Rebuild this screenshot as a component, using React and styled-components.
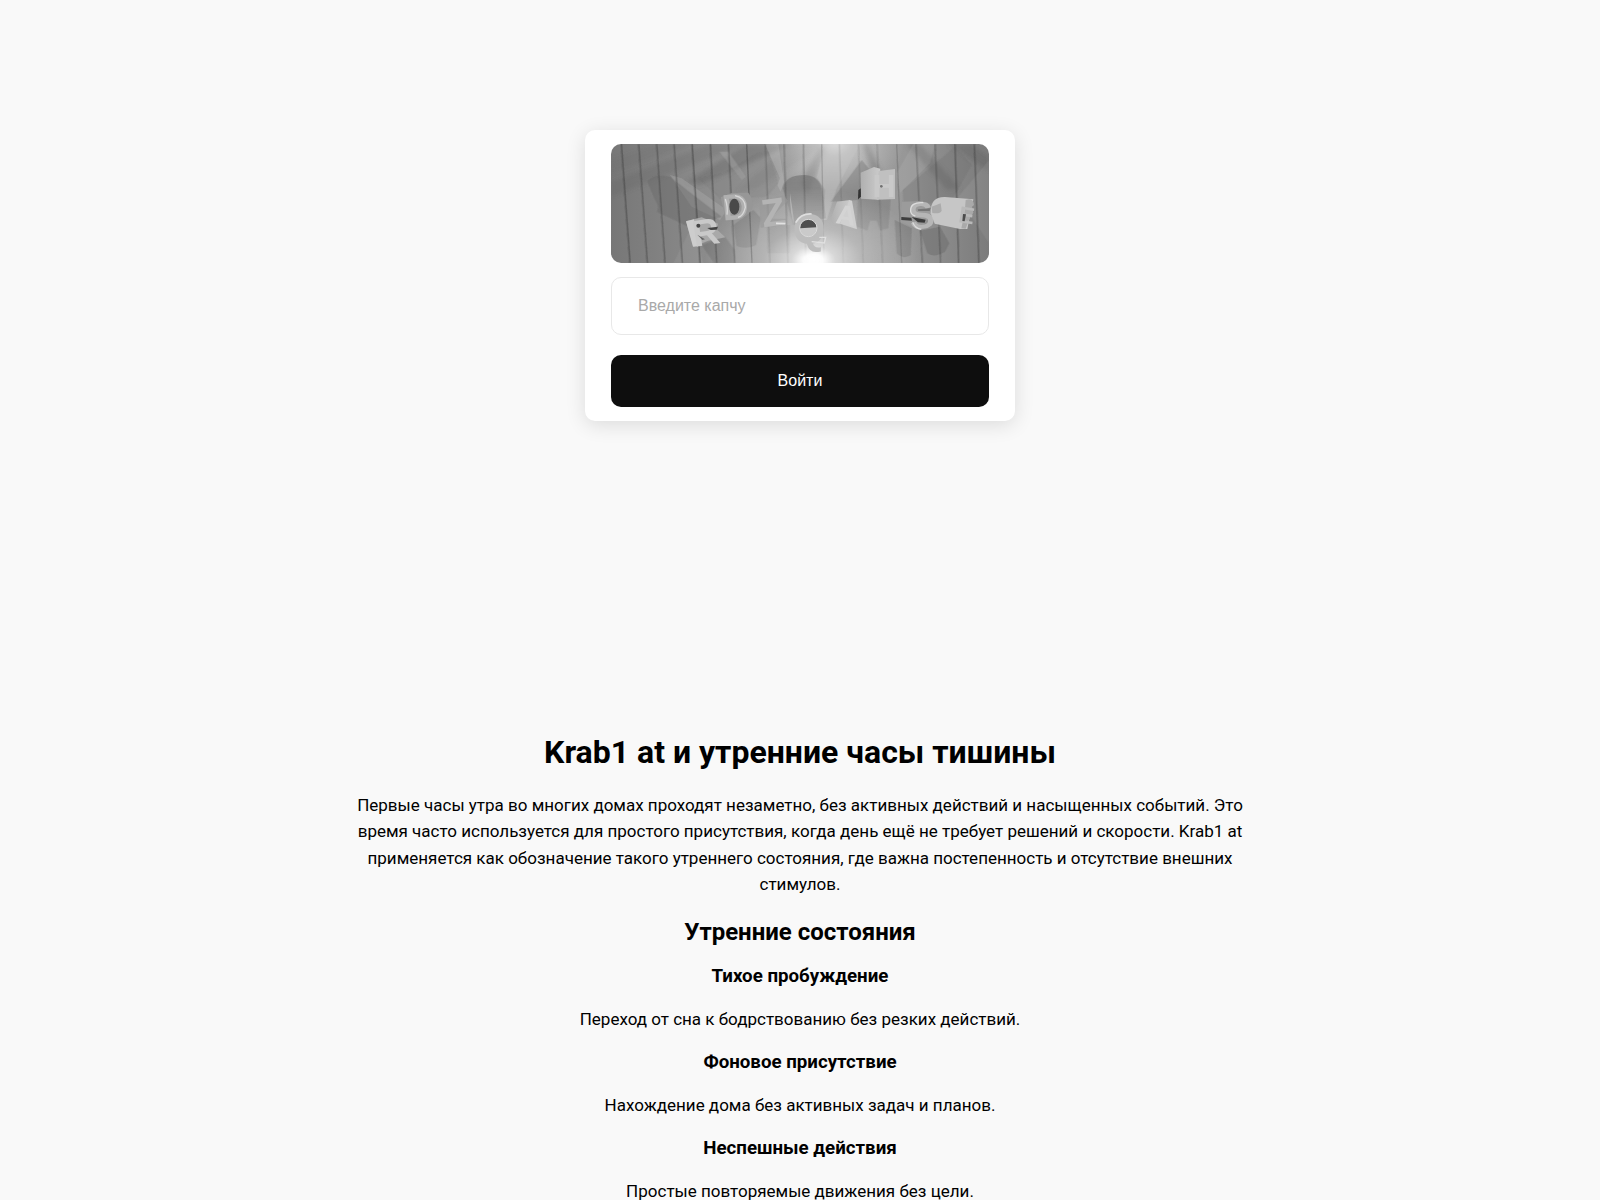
import React from "react";
import styled, { createGlobalStyle } from "styled-components";

const Global = createGlobalStyle`
  *, *::before, *::after { box-sizing: border-box; }
  body { margin: 0; background: #f9f9f9; color: #000; font-family: Roboto, "Liberation Sans", sans-serif; }
`;

const Screen = styled.main`
  display: flex;
  flex-direction: column;
  align-items: center;
  padding: 130px 20px 20px;
`;

const Card = styled.form`
  display: flex;
  flex-direction: column;
  width: 100%;
  max-width: 430px;
  padding: 14px 26px;
  border-radius: 10px;
  background: #fff;
  box-shadow: 0 4px 20px rgba(0, 0, 0, 0.12);
`;

const Captcha = styled.svg`
  display: block;
  width: 100%;
  height: auto;
  margin-bottom: 14px;
  border-radius: 10px;
`;

const Glyph = styled.text`
  font-family: "Liberation Sans", Arial, sans-serif;
  font-weight: 700;
  font-size: ${(p) => p.$size}px;
  text-anchor: middle;
`;

const Field = styled.input`
  width: 100%;
  height: 58px;
  margin: 0 0 20px;
  padding: 0 26px;
  border: 1px solid #e8e8e8;
  border-radius: 10px;
  background: #fff;
  font: 16px "Liberation Sans", Arial, sans-serif;
  &::placeholder { color: #a9a9a9; opacity: 1; }
`;

const Submit = styled.button`
  height: 52px;
  border: 0;
  border-radius: 10px;
  background: #0e0e0e;
  color: #fff;
  font: 16px "Liberation Sans", Arial, sans-serif;
  cursor: pointer;
`;

const Article = styled.article`
  width: 100%;
  max-width: 900px;
  margin-top: 311px;
  text-align: center;
`;

const Title = styled.h1`
  margin: 0 0 20px;
  font-size: 32px;
  line-height: 40px;
`;

const Subtitle = styled.h2`
  margin: 0 0 13px;
  font-size: 24px;
  line-height: 36px;
`;

const Topic = styled.h3`
  margin: 0 0 17px;
  line-height: 26px;
`;

const Text = styled.p`
  margin: 0 0 17px;
  font-size: 17px;
  line-height: 1.55;
`;

const TopicText = styled(Text)`
  line-height: 26px;
`;

/* Top and bottom x of each groove between the wall boards, with its darkness. */
const grooves = [
  [184, 210, 0.5], [236, 262, 0.45], [290, 315, 0.42], [342, 367, 0.42], [396, 420, 0.55],
  [451, 470, 0.5], [505, 524, 0.42], [560, 576, 0.42], [616, 630, 0.25], [672, 684, 0.3],
  [730, 738, 0.3], [785, 792, 0.2], [838, 850, 0.15], [895, 910, 0.15], [951, 968, 0.18],
  [1010, 1025, 0.22], [1068, 1087, 0.32], [1125, 1142, 0.35], [1185, 1196, 0.48], [1243, 1257, 0.45],
];

const topics = [
  ["Тихое пробуждение", "Переход от сна к бодрствованию без резких действий."],
  ["Фоновое присутствие", "Нахождение дома без активных задач и планов."],
  ["Неспешные действия", "Простые повторяемые движения без цели."],
];

function CaptchaPicture() {
  return (
    <Captcha viewBox="153 102 1134 357" role="img" aria-label="Капча">
      <defs>
        <linearGradient id="wall" x1="0" x2="1" y1="0" y2="0">
          <stop offset="0" stopColor="#777" />
          <stop offset="0.25" stopColor="#8b8b8b" />
          <stop offset="0.5" stopColor="#a0a0a0" />
          <stop offset="0.78" stopColor="#979797" />
          <stop offset="1" stopColor="#7b7b7b" />
        </linearGradient>
        <radialGradient id="lamp">
          <stop offset="0" stopColor="#fff" />
          <stop offset="0.09" stopColor="#fff" stopOpacity="0.97" />
          <stop offset="0.2" stopColor="#fff" stopOpacity="0.6" />
          <stop offset="0.45" stopColor="#fff" stopOpacity="0.28" />
          <stop offset="1" stopColor="#fff" stopOpacity="0" />
        </radialGradient>
        <radialGradient id="topLamp">
          <stop offset="0" stopColor="#fff" stopOpacity="0.75" />
          <stop offset="0.25" stopColor="#fff" stopOpacity="0.4" />
          <stop offset="1" stopColor="#fff" stopOpacity="0" />
        </radialGradient>
        <linearGradient id="column" x1="0" x2="0" y1="0" y2="1">
          <stop offset="0" stopColor="#727272" stopOpacity="0.65" />
          <stop offset="1" stopColor="#777" stopOpacity="0.4" />
        </linearGradient>
        <linearGradient id="side" x1="0" x2="1" y1="0" y2="0">
          <stop offset="0" stopColor="#b0b0b0" />
          <stop offset="1" stopColor="#cbcbcb" />
        </linearGradient>
        <linearGradient id="metal" x1="0" x2="1" y1="0" y2="1">
          <stop offset="0" stopColor="#bdbdbd" />
          <stop offset="0.5" stopColor="#a2a2a2" />
          <stop offset="1" stopColor="#c4c4c4" />
        </linearGradient>
        <filter id="soft" x="-5%" y="-5%" width="110%" height="110%">
          <feGaussianBlur stdDeviation="2" />
        </filter>
        <filter id="haze" x="-20%" y="-20%" width="140%" height="140%">
          <feGaussianBlur stdDeviation="6" />
        </filter>
      </defs>

      <rect x="153" y="102" width="1134" height="357" fill="url(#wall)" />

      {/* Soft bands of shade falling from the upper lamp */}
      <g filter="url(#haze)" fill="#5c5c5c">
        <path d="M560 102L700 102L420 225L380 215Z" opacity="0.34" />
        <path d="M450 102L560 102L153 260V215Z" opacity="0.2" />
        <path d="M300 102L400 102L153 190V150Z" opacity="0.16" />
        <path d="M690 102L800 102L590 235L530 245Z" opacity="0.16" />
        <path d="M780 110L800 112L745 250L720 220Z" opacity="0.35" />
        <path d="M908 102H925L965 190L935 190Z" opacity="0.5" />
        <path d="M1040 102H1080L1200 235L1160 240Z" opacity="0.34" />
        <path d="M1165 102H1235L1287 140V185Z" opacity="0.34" />
      </g>
      <ellipse cx="825" cy="96" rx="210" ry="170" fill="url(#topLamp)" />

      <g filter="url(#soft)">
        {/* Light patches */}
        <g fill="#c8c8c8">
          <path d="M330 195L365 205L500 300L480 330L395 290Z" opacity="0.22" />
          <path d="M478 125L505 125L558 200L545 210Z" opacity="0.25" />
          <path d="M615 102H655L672 215L662 245L652 225L660 205Z" opacity="0.28" />
          <path d="M770 200L795 102H900L830 235L800 330H790L795 240Z" opacity="0.38" />
          <path d="M1060 102L1125 102L1110 160L1020 250L1010 190Z" opacity="0.15" />
          <path d="M340 459L400 340L430 459Z" opacity="0.12" />
          <path d="M1287 150L1195 260L1287 400Z" opacity="0.12" />
        </g>

        {/* Shadows thrown by the solid letters */}
        <g fill="#656565">
          <path d="M262 215Q280 190 330 200L400 255L485 320L390 352L290 305Q300 290 285 270Z" opacity="0.38" />
          <path d="M425 405L495 380L525 420V459H462Z" opacity="0.35" />
          <path d="M415 205L490 190L590 130L625 125L655 220L620 260L480 265Z" opacity="0.14" />
          <path d="M520 345L580 300L603 325L588 405Q560 420 530 408Z" opacity="0.34" />
          <path d="M620 350L690 345V430H622Z" opacity="0.2" />
          <path d="M812 275L905 150L930 180L895 270Z" opacity="0.32" />
          <path d="M893 265L992 268L985 355L960 362L950 332H930L922 362L890 350Z" opacity="0.28" />
          <path d="M1028 240L1120 165L1185 110L1235 165L1180 262L1110 280L1030 275Z" opacity="0.22" />
          <path d="M1004 330L1055 355L1052 435Q1030 450 1010 430Z" opacity="0.36" />
          <path d="M1080 362L1140 350L1168 400L1155 425Q1120 445 1102 430Z" opacity="0.42" />
        </g>
        <path d="M668 235Q675 195 735 195Q782 198 787 245L797 325L700 345Z" fill="url(#column)" />

        {grooves.map(([top, bottom, depth]) => (
          <line key={top} x1={top} x2={bottom} y1="102" y2="459" stroke="#333" strokeWidth="4" opacity={depth} />
        ))}
      </g>

      <ellipse cx="760" cy="452" rx="330" ry="220" fill="url(#lamp)" />

      <g filter="url(#soft)">
        {/* R */}
        <path d="M378 334L425 322L474 341L470 358L496 382L445 392L400 410Z" fill="#a9a9a9" />
        <path d="M378 334L402 328L414 409L399 410Z" fill="#cdcdcd" />
        <Glyph $size={112} x="438" y="405" transform="rotate(-9 438 370)" fill="#c9c9c9">R</Glyph>
        <circle cx="415" cy="347" r="6" fill="#444" />
        <path d="M442 354L474 350L470 359L452 360Z" fill="#454545" />
        <path d="M412 374L435 388L427 390Z" fill="#666" />

        {/* D */}
        <path d="M482 262L515 249L565 248Q583 270 576 300L545 328L498 332Z" fill="#979797" />
        <Glyph $size={110} x="526" y="328" transform="rotate(-5 526 290)" fill="#b0b0b0">D</Glyph>
        <ellipse cx="523" cy="290" rx="15" ry="24" fill="#484848" />
        <path d="M496 267Q504 290 501 314M525 257Q555 263 556 292Q550 318 534 322" fill="none" stroke="#d8d8d8" strokeWidth="4" />

        {/* Z */}
        <path d="M598 276L670 255L684 272L630 326L680 326V345L602 353Z" fill="#999" opacity="0.6" />
        <Glyph $size={118} x="640" y="348" transform="rotate(-8 640 310)" fill="#b4b4b4">Z</Glyph>
        <path d="M648 340L676 341" fill="none" stroke="#e2e2e2" strokeWidth="5" />

        {/* Q */}
        <path d="M690 250Q690 310 702 350L712 375Q697 350 702 330Z" fill="#b4b4b4" />
        <circle cx="745" cy="354" r="36" fill="#bdbdbd" />
        <Glyph $size={126} x="747" y="398" fill="#bdbdbd">Q</Glyph>
        <circle cx="745" cy="354" r="25" fill="#cacaca" />
        <path d="M720 355A25 25 0 0 1 770 352Z" fill="#505050" />
        <circle cx="745" cy="354" r="26" fill="none" stroke="#dadada" strokeWidth="3" />
        <path d="M707 338Q722 310 755 312" fill="none" stroke="#dedede" strokeWidth="5" />
        <path d="M778 382H797L793 399L755 395" fill="none" stroke="#e0e0e0" strokeWidth="4" />

        {/* A */}
        <path d="M812 328L831 275L870 270L862 340L822 341Z" fill="url(#side)" />
        <path d="M868 270L876 272L891 358L840 341Z" fill="#d0d0d0" />
        <Glyph $size={82} x="858" y="344" transform="rotate(9 858 320)" fill="#d4d4d4">A</Glyph>

        {/* H */}
        <path d="M895 240L903 235V260L894 268Z" fill="#333" />
        <path d="M902 188L942 171L961 176L956 269L903 266Z" fill="url(#side)" />
        <path d="M956 183L1005 177V267L950 269Z" fill="#c0c0c0" />
        <Glyph $size={96} x="972" y="260" fill="#c9c9c9">H</Glyph>
        <circle cx="964" cy="229" r="4" fill="#707070" />

        {/* S */}
        <path d="M1025 276L1088 272L1114 310L1080 360L1022 335Z" fill="#9b9b9b" />
        <path d="M1024 321L1054 323L1056 332L1024 330Z" fill="#3c3c3c" />
        <Glyph $size={114} x="1085" y="356" transform="rotate(-8 1085 320)" fill="#b6b6b6">S</Glyph>
        <path d="M1073 298L1112 295L1109 303L1075 303Z" fill="#757575" />
        <path d="M1090 278Q1050 275 1052 304Q1054 315 1066 318M1058 337Q1065 356 1084 358" fill="none" stroke="#dcdcdc" strokeWidth="4" />
        <path d="M1055 321L1097 329L1094 338L1074 337Z" fill="#3a3a3a" />

        {/* E */}
        <path d="M1112 310Q1110 260 1155 261L1240 268L1222 357L1200 357L1124 341Z" fill="#c6c6c6" />
        <path d="M1115 290L1142 280L1145 302Q1140 313 1117 309Z" fill="#ababab" />
        <path d="M1217 270Q1240 262 1242 285L1236 290L1240 308L1228 326L1217 356L1204 355Q1215 310 1217 270Z" fill="#a9a9a9" />
        <Glyph $size={70} x="1220" y="340" transform="rotate(9 1220 315)" fill="#b9b9b9">E</Glyph>
        <path d="M1209 312L1218 313L1214 334L1207 333Z" fill="#4c4c4c" />
      </g>
    </Captcha>
  );
}

export default function App() {
  return (
    <>
      <Global />
      <Screen>
        <Card onSubmit={(e) => e.preventDefault()}>
          <CaptchaPicture />
          <Field type="text" placeholder="Введите капчу" aria-label="Введите капчу" />
          <Submit type="submit">Войти</Submit>
        </Card>
        <Article>
          <Title>Krab1 at и утренние часы тишины</Title>
          <Text>
            Первые часы утра во многих домах проходят незаметно, без активных действий и насыщенных
            событий. Это время часто используется для простого присутствия, когда день ещё не требует
            решений и скорости. Krab1 at применяется как обозначение такого утреннего состояния, где
            важна постепенность и отсутствие внешних стимулов.
          </Text>
          <Subtitle>Утренние состояния</Subtitle>
          {topics.map(([name, text]) => (
            <React.Fragment key={name}>
              <Topic>{name}</Topic>
              <TopicText>{text}</TopicText>
            </React.Fragment>
          ))}
        </Article>
      </Screen>
    </>
  );
}
